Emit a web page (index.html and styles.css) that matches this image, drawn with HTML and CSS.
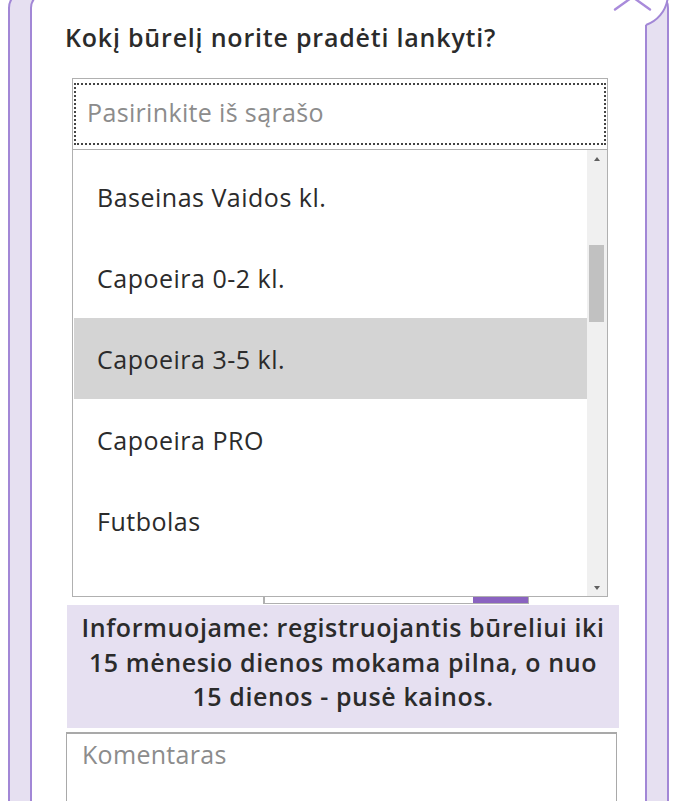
FILE: index.html
```html
<!DOCTYPE html>
<html lang="lt">
<head>
<meta charset="utf-8">
<title>Registracija</title>
<link rel="stylesheet" href="styles.css">
</head>
<body>
<div class="frame">
  <div class="panel">
    <h2 class="question">Kokį būrelį norite pradėti lankyti?</h2>
    <div class="select-wrap">
      <div class="select">
        <div class="select-focus">Pasirinkite iš sąrašo</div>
      </div>
      <div class="dropdown">
        <div class="options">
          <div class="options-inner">
            <div class="option">Anglų kalba</div>
            <div class="option">Baseinas Vaidos kl.</div>
            <div class="option">Capoeira 0-2 kl.</div>
            <div class="option selected">Capoeira 3-5 kl.</div>
            <div class="option">Capoeira PRO</div>
            <div class="option">Futbolas</div>
            <div class="option last">Programavimas 1-4 kl.</div>
          </div>
        </div>
        <div class="scrollbar">
          <div class="arrow up"></div>
          <div class="track"><div class="thumb"></div></div>
          <div class="arrow down"></div>
        </div>
      </div>
    </div>
    <div class="hidden-fields">
      <div class="file-row">
        <div class="file-field"></div>
        <div class="file-btn"></div>
      </div>
    </div>
    <div class="info">Informuojame: registruojantis būreliui iki 15 mėnesio dienos mokama pilna, o nuo 15 dienos - pusė kainos.</div>
    <div class="comment">Komentaras</div>
  </div>
  <svg class="close" width="70" height="40" viewBox="0 0 70 40" aria-hidden="true">
    <circle cx="35" cy="-6" r="32.7" fill="#fff"/>
    <path d="M46 25 A32.7 32.7 0 0 0 67.5 -0.5" fill="none" stroke="#a287d6" stroke-width="2"/>
    <path d="M15 9.5 L32.5 -3 L50 9.5" fill="none" stroke="#a98bdb" stroke-width="2.4" stroke-linecap="round" stroke-linejoin="round"/>
  </svg>
</div>
</body>
</html>
```
FILE: styles.css
```css
html, body {
  margin: 0;
  padding: 0;
  background: #fff;
  overflow: hidden;
  height: 801px;
}
body {
  font-family: "Open Sans", "Noto Sans", sans-serif;
  color: #333;
}
.frame {
  position: relative;
  margin: -10px 9px 0 8px;
  height: 860px;
  background: #e6e0f1;
  border: 2px solid #a287d6;
  border-radius: 18px;
  padding: 0 20px;
}
.panel {
  background: #fff;
  border: 2px solid #a287d6;
  border-radius: 16px;
  height: 900px;
  box-sizing: border-box;
}
.question {
  margin: 0;
  padding: 26px 0 0 33px;
  font-size: 25px;
  font-weight: 600;
  line-height: 34px;
  color: #2b2b2b;
  letter-spacing: 0.8px;
}
.select-wrap {
  position: relative;
  margin: 24px 37px 0 40px;
}
.select {
  height: 72px;
  box-sizing: border-box;
  border: 1px solid #b0b0b0;
  padding: 4px 1px;
}
.select-focus {
  height: 100%;
  box-sizing: border-box;
  border: 2px dotted #444;
  padding: 0 0 4px 11px;
  display: flex;
  align-items: center;
  font-size: 25px;
  line-height: 34px;
  color: #8c8c8c;
  letter-spacing: 0.35px;
}
.dropdown {
  position: absolute;
  left: 0;
  right: 0;
  top: 72px;
  height: 447px;
  box-sizing: border-box;
  border: 1px solid #b0b0b0;
  border-top: none;
  background: #fff;
  display: flex;
  z-index: 2;
}
.options {
  flex: 1;
  overflow: hidden;
  padding-left: 1px;
}
.options-inner {
  margin-top: -75px;
}
.option {
  height: 81px;
  display: flex;
  align-items: center;
  padding-left: 23px;
  font-size: 25px;
  line-height: 34px;
  color: #2b2b2b;
  letter-spacing: 0.5px;
}
.option.last {
  padding-top: 8px;
}
.option.selected {
  background: #d4d4d4;
}
.scrollbar {
  width: 20px;
  background: #f0f0f0;
  display: flex;
  flex-direction: column;
}
.arrow {
  height: 17px;
  display: flex;
  align-items: center;
  justify-content: center;
}
.arrow::before {
  content: "";
  border-left: 3.5px solid transparent;
  border-right: 3.5px solid transparent;
}
.arrow.up::before {
  border-bottom: 4px solid #606060;
}
.arrow.down::before {
  border-top: 4px solid #606060;
}
.track {
  flex: 1;
  padding: 78px 3px 0 2px;
}
.thumb {
  height: 77px;
  background: #c1c1c1;
}
.hidden-fields {
  height: 455px;
  display: flex;
  align-items: flex-end;
  padding-left: 231px;
  box-sizing: border-box;
  padding-bottom: 1px;
}
.file-row {
  display: flex;
  width: 266px;
  height: 34px;
  border: 1px solid #b0b0b0;
  border-left-width: 2px;
  box-sizing: border-box;
}
.file-field {
  flex: 1;
}
.file-btn {
  width: 55px;
  background: #8a63c0;
}
.info {
  margin: 0 26px 0 35px;
  background: #e6e0f1;
  padding: 5px 10px 14px;
  text-align: center;
  font-size: 25px;
  font-weight: 600;
  line-height: 34.5px;
  color: #2b2b2b;
  letter-spacing: 0.6px;
}
.comment {
  margin: 4px 28px 0 34px;
  height: 100px;
  border: 1px solid #a9a9a9;
  border-top-width: 2px;
  padding: 3px 15px;
  font-size: 25px;
  line-height: 34px;
  color: #8c8c8c;
  letter-spacing: 0.3px;
}
.close {
  position: absolute;
  right: -3px;
  top: 8px;
  overflow: visible;
}
```
